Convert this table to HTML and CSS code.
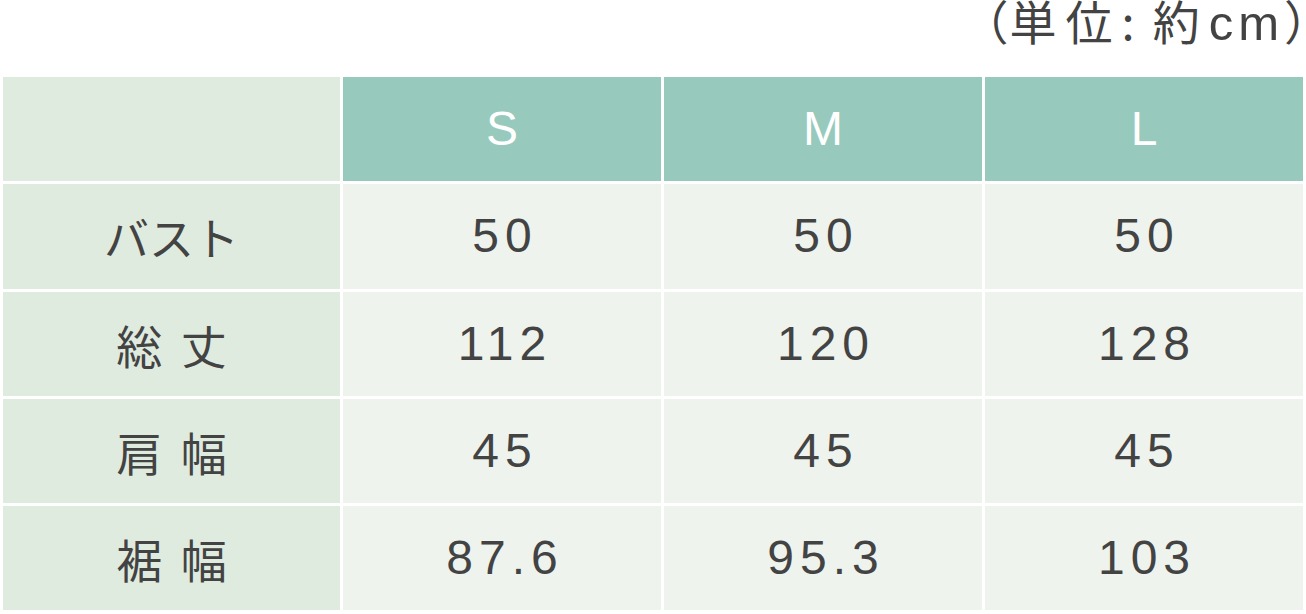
FILE: index.html
```html
<!DOCTYPE html>
<html lang="ja">
<head>
<meta charset="utf-8">
<title>サイズ表</title>
<link rel="stylesheet" href="styles.css">
</head>
<body>
<div class="page">
  <div class="unit"><span class="unit-text"><span class="paren-open">（</span>単位<span class="unit-colon">:</span>約<span class="unit-cm">cm</span><span class="paren-close">）</span></span></div>
  <div class="size-table">
    <div class="cell label head-blank"></div>
    <div class="cell head">S</div>
    <div class="cell head">M</div>
    <div class="cell head">L</div>

    <div class="cell label label-kana">バスト</div>
    <div class="cell num">50</div>
    <div class="cell num">50</div>
    <div class="cell num">50</div>

    <div class="cell label">総 丈</div>
    <div class="cell num">112</div>
    <div class="cell num">120</div>
    <div class="cell num">128</div>

    <div class="cell label">肩 幅</div>
    <div class="cell num">45</div>
    <div class="cell num">45</div>
    <div class="cell num">45</div>

    <div class="cell label">裾 幅</div>
    <div class="cell num">87.6</div>
    <div class="cell num">95.3</div>
    <div class="cell num">103</div>
  </div>
</div>
</body>
</html>
```

FILE: styles.css
```css
html, body {
  margin: 0;
  padding: 0;
  background: #ffffff;
}

body {
  font-family: "Liberation Sans", "Noto Sans CJK JP", sans-serif;
  color: #434343;
}

.page {
  width: 1306px;
  height: 614px;
  overflow: hidden;
}

.unit {
  height: 77px;
  display: flex;
  justify-content: flex-end;
  align-items: flex-start;
  padding-right: 6px;
  padding-top: 2px;
  box-sizing: border-box;
}

.unit-text {
  font-family: "Noto Sans CJK JP", sans-serif;
  font-size: 47px;
  line-height: 36px;
  letter-spacing: 9px;
  white-space: nowrap;
}

.paren-open {
  letter-spacing: 1px;
}

.paren-close {
  letter-spacing: -31px;
}

.unit-colon {
  letter-spacing: 18px;
}

.unit-cm {
  font-family: "Liberation Sans", sans-serif;
  font-size: 49px;
  letter-spacing: 5px;
}

.size-table {
  display: grid;
  grid-template-columns: 337px repeat(3, 318px);
  grid-auto-rows: 104.3px;
  gap: 3px;
  margin-left: 3px;
}

.cell {
  display: flex;
  align-items: center;
  justify-content: center;
  background: #eef3ed;
  font-size: 48px;
  line-height: 1;
  letter-spacing: 6px;
  padding-left: 6px;
  box-sizing: border-box;
}

.head {
  background: #97cabd;
  color: #ffffff;
  letter-spacing: 0;
  padding-left: 0;
}

.label {
  background: #e0ebdf;
  font-family: "Noto Sans CJK JP", sans-serif;
  font-size: 46px;
  letter-spacing: 4px;
  padding-left: 4px;
}

.label-kana {
  font-size: 45px;
  letter-spacing: 0;
  padding-left: 0;
}
```
